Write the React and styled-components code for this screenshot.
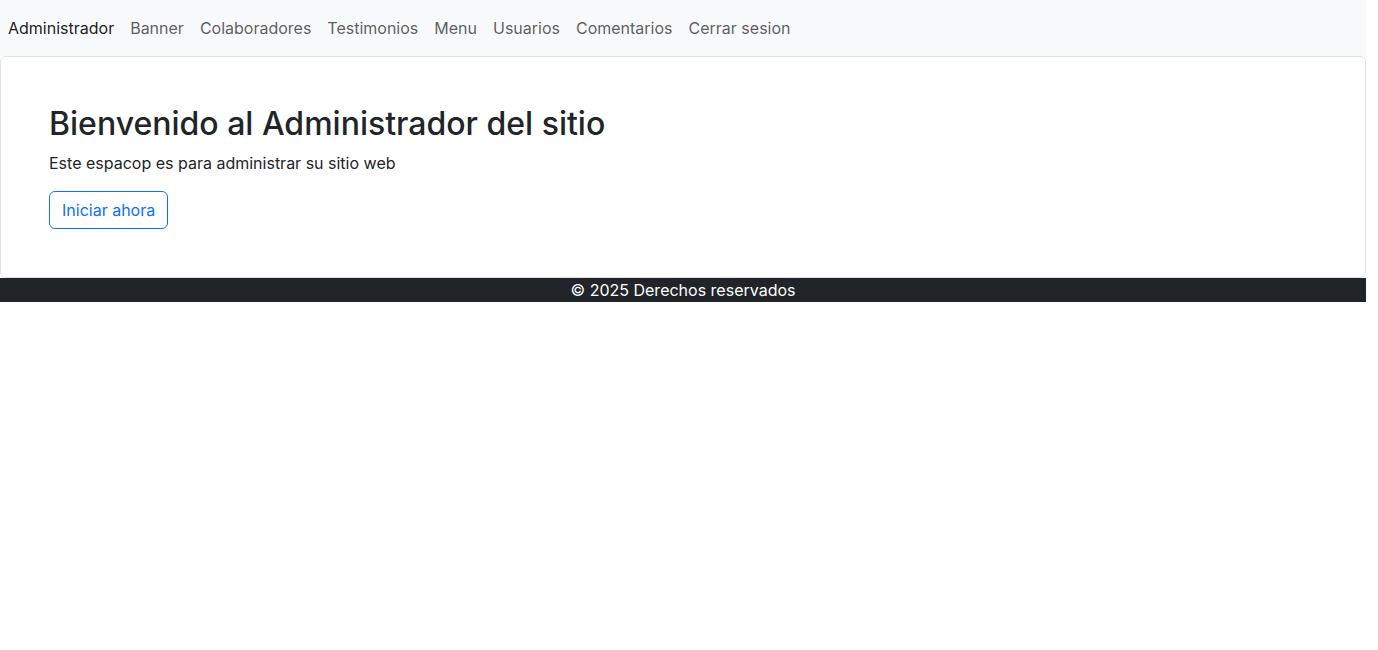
import React from "react";
import styled, { createGlobalStyle } from "styled-components";

const Global = createGlobalStyle`
  * { box-sizing: border-box; }
  body {
    margin: 0;
    font-family: Inter, "Noto Sans", "Liberation Sans", sans-serif;
    font-size: 16px;
    line-height: 1.5;
    color: #212529;
    background: #fff;
  }
`;

const Page = styled.div`
  width: 1366px;
`;

const NavBar = styled.nav`
  background: #f8f9fa;
  padding: 8px 0;
`;

const NavList = styled.ul`
  display: flex;
  list-style: none;
  margin: 0;
  padding: 0;
`;

const NavLink = styled.a`
  display: block;
  padding: 8px;
  line-height: 24px;
  text-decoration: none;
  color: ${(p) => (p.$active ? "rgba(0,0,0,0.9)" : "rgba(0,0,0,0.65)")};
`;

const Card = styled.main`
  border: 1px solid #dee2e6;
  border-radius: 6px;
  padding: 48px;
`;

const Title = styled.h1`
  margin: 0 0 8px;
  font-size: 32px;
  font-weight: 500;
  line-height: 1.2;
`;

const Lead = styled.p`
  margin: 0 0 16px;
`;

const OutlineButton = styled.a`
  display: inline-block;
  padding: 6px 12px;
  border: 1px solid #0d6efd;
  border-radius: 6px;
  color: #0d6efd;
  text-decoration: none;
  line-height: 24px;
`;

const Footer = styled.footer`
  background: #212529;
  color: #fff;
  text-align: center;
  line-height: 24px;
`;

const links = ["Banner", "Colaboradores", "Testimonios", "Menu", "Usuarios", "Comentarios", "Cerrar sesion"];

export default function App() {
  return (
    <Page>
      <Global />
      <NavBar>
        <NavList>
          <li><NavLink $active href="#">Administrador</NavLink></li>
          {links.map((l) => (
            <li key={l}><NavLink href="#">{l}</NavLink></li>
          ))}
        </NavList>
      </NavBar>
      <Card>
        <Title>Bienvenido al Administrador del sitio</Title>
        <Lead>Este espacop es para administrar su sitio web</Lead>
        <OutlineButton href="#">Iniciar ahora</OutlineButton>
      </Card>
      <Footer>© 2025 Derechos reservados</Footer>
    </Page>
  );
}
